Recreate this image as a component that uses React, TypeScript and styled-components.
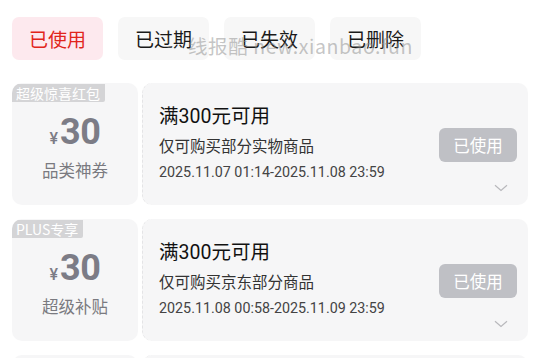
import React, { FC } from 'react';
import styled, { createGlobalStyle } from 'styled-components';

const GlobalStyle = createGlobalStyle`
  html, body {
    margin: 0;
    padding: 0;
    background: #ffffff;
    overflow: hidden;
  }
  body {
    font-family: Roboto, "Noto Sans CJK SC", sans-serif;
    color: #1a1a1a;
  }
`;

interface Coupon {
  badge: string;
  amount: string;
  label: string;
  title: string;
  desc: string;
  period: string;
}

const coupons: Coupon[] = [
  {
    badge: '超级惊喜红包',
    amount: '30',
    label: '品类神券',
    title: '满300元可用',
    desc: '仅可购买部分实物商品',
    period: '2025.11.07 01:14-2025.11.08 23:59',
  },
  {
    badge: 'PLUS专享',
    amount: '30',
    label: '超级补贴',
    title: '满300元可用',
    desc: '仅可购买京东部分商品',
    period: '2025.11.08 00:58-2025.11.09 23:59',
  },
];

const tabs = ['已使用', '已过期', '已失效', '已删除'];

const Page = styled.div`
  position: relative;
  width: 540px;
  height: 358px;
  overflow: hidden;
  box-sizing: border-box;
  padding: 17px 12px 0 12px;
`;

const TabBar = styled.div`
  display: flex;
  gap: 15px;
  margin-bottom: 23px;
`;

const Tab = styled.div<{ $active?: boolean }>`
  width: 91px;
  height: 43px;
  border-radius: 7px;
  display: flex;
  align-items: center;
  justify-content: center;
  font-family: "Noto Sans CJK SC", sans-serif;
  font-size: 19px;
  background: ${({ $active }) => ($active ? '#fde9ee' : '#f7f7f7')};
  color: ${({ $active }) => ($active ? '#e1251b' : '#1a1a1a')};
`;

const Watermark = styled.div`
  position: absolute;
  left: 188px;
  top: 31px;
  font-family: "Noto Sans CJK SC", sans-serif;
  font-size: 19.5px;
  color: rgba(140, 140, 140, 0.5);
  letter-spacing: 0.6px;
  pointer-events: none;
  white-space: nowrap;
`;

const List = styled.div`
  display: flex;
  flex-direction: column;
  gap: 14px;
`;

const Card = styled.div`
  display: flex;
  height: 122px;
  gap: 4px;
`;

const Stub = styled.div`
  position: relative;
  width: 126px;
  flex-shrink: 0;
  background: #f6f6f7;
  border-radius: 10px;
  overflow: hidden;
  display: flex;
  flex-direction: column;
  align-items: center;
  justify-content: center;
  padding-top: 4px;
  box-sizing: border-box;
`;

const Badge = styled.div`
  position: absolute;
  left: 0;
  top: 1px;
  height: 18px;
  padding: 0 5px 0 4px;
  background: #d4d4d6;
  color: #ffffff;
  font-family: "Noto Sans CJK SC", sans-serif;
  font-size: 14px;
  line-height: 18px;
  border-bottom-right-radius: 2px;
  white-space: nowrap;
`;

const Amount = styled.div`
  display: flex;
  align-items: baseline;
  color: #7c7c86;
  line-height: 40px;
`;

const Currency = styled.span`
  font-size: 16px;
  font-weight: 500;
  margin-right: 2px;
`;

const Value = styled.span`
  font-size: 36px;
  font-weight: 700;
  letter-spacing: -0.5px;
`;

const StubLabel = styled.div`
  margin-top: 0;
  font-family: "Noto Sans CJK SC", sans-serif;
  font-size: 16.5px;
  color: #7a7a80;
  line-height: 22px;
`;

const Body = styled.div`
  position: relative;
  flex: 1;
  background: #f6f6f7;
  border-radius: 10px;
  border-left: 1px dashed #e4e4e6;
  display: flex;
  align-items: center;
  padding: 0 11px 0 16px;
`;

const Info = styled.div`
  flex: 1;
  display: flex;
  flex-direction: column;
  padding-bottom: 2px;
`;

const Title = styled.div`
  font-family: Roboto, "Noto Sans CJK SC", sans-serif;
  font-size: 19.5px;
  font-weight: 400;
  line-height: 26px;
  color: #111111;
`;

const Desc = styled.div`
  margin-top: 4px;
  font-family: "Noto Sans CJK SC", sans-serif;
  font-size: 15.5px;
  line-height: 22px;
  color: #333333;
`;

const Period = styled.div`
  margin-top: 6px;
  font-size: 14.3px;
  line-height: 20px;
  color: #444444;
`;

const UsedButton = styled.div`
  width: 78px;
  height: 34px;
  border-radius: 6px;
  background: #bfc0c5;
  color: #ffffff;
  font-family: "Noto Sans CJK SC", sans-serif;
  font-size: 16.5px;
  display: flex;
  align-items: center;
  justify-content: center;
  margin-top: 2px;
`;

const Chevron = styled.svg`
  position: absolute;
  right: 20px;
  bottom: 13px;
  width: 14px;
  height: 8px;
`;

const CouponCard: FC<{ coupon: Coupon }> = ({ coupon }) => (
  <Card>
    <Stub>
      <Badge>{coupon.badge}</Badge>
      <Amount>
        <Currency>¥</Currency>
        <Value>{coupon.amount}</Value>
      </Amount>
      <StubLabel>{coupon.label}</StubLabel>
    </Stub>
    <Body>
      <Info>
        <Title>{coupon.title}</Title>
        <Desc>{coupon.desc}</Desc>
        <Period>{coupon.period}</Period>
      </Info>
      <UsedButton>已使用</UsedButton>
      <Chevron viewBox="0 0 14 8">
        <path d="M1 1.2 L7 6.5 L13 1.2" fill="none" stroke="#b8b8bc" strokeWidth="1.2" />
      </Chevron>
    </Body>
  </Card>
);

// the next coupon only peeks in at the bottom edge
const PeekCard: FC = () => (
  <Card>
    <Stub />
    <Body />
  </Card>
);

const App: FC = () => (
  <>
    <GlobalStyle />
    <Page>
      <TabBar>
        {tabs.map((t, i) => (
          <Tab key={t} $active={i === 0}>
            {t}
          </Tab>
        ))}
      </TabBar>
      <List>
        {coupons.map((c, i) => (
          <CouponCard key={i} coupon={c} />
        ))}
        <PeekCard />
      </List>
      <Watermark>线报酷 new.xianbao.fun</Watermark>
    </Page>
  </>
);

export default App;
